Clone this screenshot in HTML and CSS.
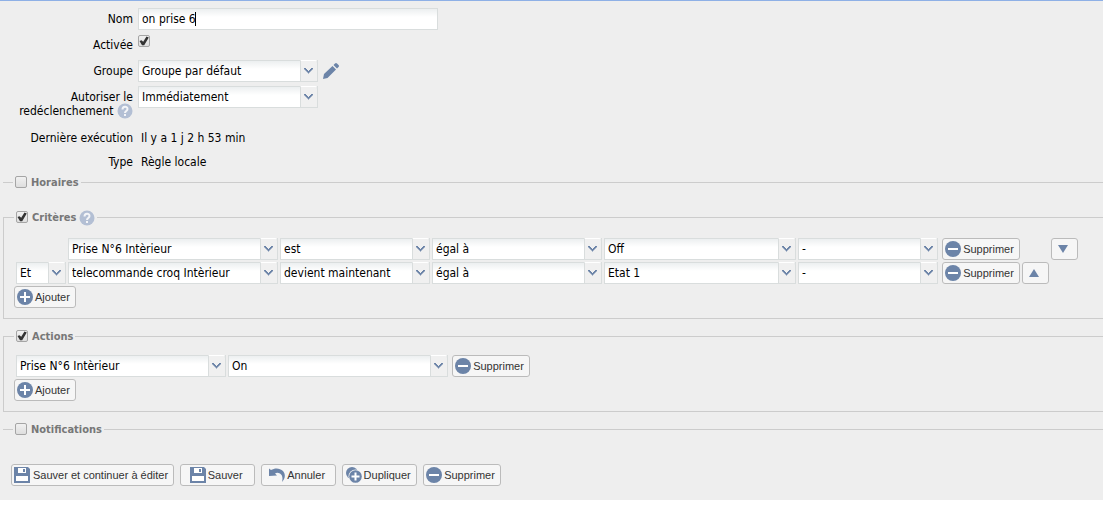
FILE: index.html
```html
<!DOCTYPE html>
<html lang="fr">
<head>
<meta charset="utf-8">
<title>Règle</title>
<link rel="stylesheet" href="styles.css">
</head>
<body>
<svg class="sprite" aria-hidden="true">
  <symbol id="chevron" viewBox="0 0 9 6"><path d="M0 0h2v1h1v1h1v1h1V2h1V1h1V0h2v1.500H8v1H7v1H6v1H5v1H4v-1H3v-1H2v-1H1v-1H0z"/></symbol>
  <symbol id="minus" viewBox="0 0 16 16"><circle cx="8" cy="8" r="8"/><path fill="#fff" d="M3 7h10v2H3z"/></symbol>
  <symbol id="plus" viewBox="0 0 16 16"><circle cx="8" cy="8" r="8"/><path fill="#fff" d="M7 3h2v4h4v2H9v4H7V9H3V7h4z"/></symbol>
  <symbol id="save" viewBox="0 0 16 16"><path d="M0 0h14l2 2v14H0z"/><path fill="#fff" d="M4 1h8v5H4zM2 9h12v5H2z"/><path d="M9 2h2v3H9z"/></symbol>
  <symbol id="undo" viewBox="0 0 16 16"><path d="M0 1.500l2 1.500C6 .5 11 1 14 4c3 3.500 2 8-1 11 1-4 .5-7-2-8.500-2-1-3.500-1-5 0L8 8.500 0 9z"/></symbol>
  <symbol id="copy" viewBox="0 0 16 16"><circle cx="6" cy="6" r="6"/><circle cx="9.500" cy="9.500" r="7" fill="#f5f5f5"/><circle cx="9.500" cy="9.500" r="6.300"/><path fill="#fff" d="M8.500 5.500h2v3h3v2h-3v3h-2v-3h-3v-2h3z"/></symbol>
  <symbol id="pencil" viewBox="0 0 16 16"><path d="M0 16l1-5 8.500-8L13 6.500 4.500 15zM10.500 2l1.500-1.500q1-1 2 0L15.500 2q1 1 0 2L14 5.500z"/></symbol>
  <symbol id="help" viewBox="0 0 16 16"><circle cx="8" cy="8" r="7.500"/><path fill="none" stroke="#f4f5f8" stroke-width="2" d="M5.500 6.500C5.500 3 10.500 3 10.500 6c0 2-2.500 2-2.500 4"/><path fill="#f4f5f8" d="M7 11h2v2H7z"/></symbol>
  <symbol id="down" viewBox="0 0 10 8"><path d="M0 0h10L5 8z"/></symbol>
  <symbol id="up" viewBox="0 0 10 8"><path d="M0 8h10L5 0z"/></symbol>
</svg>
<form class="rule">
  <div class="fields">
    <div class="row">
      <label class="row-label" for="name">Nom</label>
      <input class="text" id="name" type="text" value="on prise 6" autofocus>
    </div>
    <div class="row">
      <label class="row-label" for="active">Activée</label>
      <input class="check check-row" id="active" type="checkbox" checked>
    </div>
    <div class="row">
      <label class="row-label" for="group">Groupe</label>
      <span class="combo combo-field"><select id="group"><option>Groupe par défaut</option></select><svg class="chevron"><use href="#chevron"/></svg></span>
      <button class="plain" type="button" aria-label="Modifier le groupe"><svg class="icon"><use href="#pencil"/></svg></button>
    </div>
    <div class="row">
      <label class="row-label row-label-tall" for="retrigger">Autoriser le redéclenchement <svg class="help"><use href="#help"/></svg></label>
      <span class="combo combo-field"><select id="retrigger"><option>Immédiatement</option></select><svg class="chevron"><use href="#chevron"/></svg></span>
    </div>
    <div class="row">
      <span class="row-label">Dernière exécution</span>
      <span class="value">Il y a 1 j 2 h 53 min</span>
    </div>
    <div class="row">
      <span class="row-label">Type</span>
      <span class="value">Règle locale</span>
    </div>
  </div>

  <fieldset class="section section-closed">
    <legend><input class="check" id="hours" type="checkbox"><label for="hours">Horaires</label></legend>
  </fieldset>

  <fieldset class="section section-criteria">
    <legend><input class="check" id="criteria" type="checkbox" checked><label for="criteria">Critères</label><svg class="help"><use href="#help"/></svg></legend>
    <div class="lines">
      <div class="line criteria">
        <span class="combo combo-first"><select aria-label="Objet"><option>Prise N°6 Intèrieur</option></select><svg class="chevron"><use href="#chevron"/></svg></span>
        <span class="combo"><select aria-label="Condition"><option>est</option></select><svg class="chevron"><use href="#chevron"/></svg></span>
        <span class="combo"><select aria-label="Comparaison"><option>égal à</option></select><svg class="chevron"><use href="#chevron"/></svg></span>
        <span class="combo"><select aria-label="Valeur"><option>Off</option></select><svg class="chevron"><use href="#chevron"/></svg></span>
        <span class="combo"><select aria-label="Option"><option>-</option></select><svg class="chevron"><use href="#chevron"/></svg></span>
        <button class="btn btn-remove" type="button"><svg class="icon"><use href="#minus"/></svg>Supprimer</button>
        <button class="btn btn-down" type="button" aria-label="Descendre"><svg class="arrow"><use href="#down"/></svg></button>
      </div>
      <div class="line criteria">
        <span class="combo"><select aria-label="Opérateur"><option>Et</option></select><svg class="chevron"><use href="#chevron"/></svg></span>
        <span class="combo"><select aria-label="Objet"><option>telecommande croq Intèrieur</option></select><svg class="chevron"><use href="#chevron"/></svg></span>
        <span class="combo"><select aria-label="Condition"><option>devient maintenant</option></select><svg class="chevron"><use href="#chevron"/></svg></span>
        <span class="combo"><select aria-label="Comparaison"><option>égal à</option></select><svg class="chevron"><use href="#chevron"/></svg></span>
        <span class="combo"><select aria-label="Valeur"><option>Etat 1</option></select><svg class="chevron"><use href="#chevron"/></svg></span>
        <span class="combo"><select aria-label="Option"><option>-</option></select><svg class="chevron"><use href="#chevron"/></svg></span>
        <button class="btn btn-remove" type="button"><svg class="icon"><use href="#minus"/></svg>Supprimer</button>
        <button class="btn" type="button" aria-label="Monter"><svg class="arrow"><use href="#up"/></svg></button>
      </div>
      <button class="btn" type="button"><svg class="icon"><use href="#plus"/></svg>Ajouter</button>
    </div>
  </fieldset>

  <fieldset class="section section-actions">
    <legend><input class="check" id="actions" type="checkbox" checked><label for="actions">Actions</label></legend>
    <div class="lines">
      <div class="line actions">
        <span class="combo"><select aria-label="Objet"><option>Prise N°6 Intèrieur</option></select><svg class="chevron"><use href="#chevron"/></svg></span>
        <span class="combo"><select aria-label="Action"><option>On</option></select><svg class="chevron"><use href="#chevron"/></svg></span>
        <button class="btn btn-remove" type="button"><svg class="icon"><use href="#minus"/></svg>Supprimer</button>
      </div>
      <button class="btn" type="button"><svg class="icon"><use href="#plus"/></svg>Ajouter</button>
    </div>
  </fieldset>

  <fieldset class="section section-closed section-notify">
    <legend><input class="check" id="notify" type="checkbox"><label for="notify">Notifications</label></legend>
  </fieldset>

  <div class="toolbar">
    <button class="btn btn-wide" type="button"><svg class="icon"><use href="#save"/></svg>Sauver et continuer à éditer</button>
    <button class="btn" type="button"><svg class="icon"><use href="#save"/></svg>Sauver</button>
    <button class="btn" type="button"><svg class="icon"><use href="#undo"/></svg>Annuler</button>
    <button class="btn" type="button"><svg class="icon"><use href="#copy"/></svg>Dupliquer</button>
    <button class="btn" type="button"><svg class="icon"><use href="#minus"/></svg>Supprimer</button>
  </div>
</form>
</body>
</html>
```
FILE: styles.css
```css
*, *::before, *::after { box-sizing: border-box; }
body {
  margin: 0;
  background: #fff;
  color: #000;
  font: 12px/14px Tahoma, "DejaVu Sans Condensed", sans-serif;
  overflow-x: hidden;
}
.sprite { display: none; }
svg { flex: none; fill: #6c84a8; }
.rule {
  padding-bottom: 14px;
  border-top: 1px solid #8eb0e6;
  background: #eee;
}
.fields {
  display: flex;
  flex-direction: column;
  gap: 4px;
  padding-top: 7px;
}
.row {
  display: flex;
  align-items: flex-start;
  min-height: 20px;
}
.row:nth-child(-n+3) { min-height: 22px; }
.row-label {
  width: 133px;
  margin-right: 5px;
  padding-top: 4px;
  padding-left: 16px;
  text-align: right;
}
.row-label-tall { padding-bottom: 5px; }
.value { padding: 4px 3px 0; }
.help {
  width: 16px;
  height: 16px;
  margin: -1px 0;
  vertical-align: top;
  fill: #b3bfd4;
}
.text, .combo select {
  height: 22px;
  padding: 0 3px;
  border: 1px solid #d9dddd;
  border-radius: 0;
  outline: none;
  background: linear-gradient(#eceff0, #fff 8px);
  color: #000;
  font: inherit;
}
/* steady caret after the name */
.text {
  width: 300px;
  background:
    linear-gradient(#000, #000) 56px 3px / 1px 14px no-repeat,
    linear-gradient(#eceff0, #fff 8px);
  caret-color: transparent;
}
.check {
  appearance: none;
  width: 12px;
  height: 12px;
  margin: 0;
  border: 1px solid #a5a5a5;
  border-radius: 2px;
  background: linear-gradient(#f1f1f1, #dedede);
}
.check:checked::before {
  content: "";
  display: block;
  height: 10px;
  background: #333;
  clip-path: polygon(5% 50%, 25% 42%, 42% 58%, 75% 5%, 98% 15%, 52% 92%, 30% 92%);
}
.check-row { margin-top: 1px; }
.combo {
  position: relative;
  display: block;
  height: 22px;
}
.combo select {
  display: block;
  appearance: none;
  width: 100%;
  padding-right: 18px;
}
.combo::after {
  content: "";
  position: absolute;
  top: 0;
  right: 0;
  width: 18px;
  height: 22px;
  border: 1px solid #d9dddd;
  border-top-color: #fff;
  border-radius: 0 3px 0 0;
  background: #f0f0f0;
  pointer-events: none;
}
.chevron {
  position: absolute;
  z-index: 1;
  top: 8px;
  right: 5px;
  width: 9px;
  height: 6px;
  pointer-events: none;
}
.combo-field { width: 180px; }
.plain {
  display: flex;
  margin-left: 5px;
  padding: 3px 0;
  border: 0;
  background: none;
}
.icon { width: 16px; height: 16px; }
.section {
  min-width: 0;
  margin: 0 -1px 0 3px;
  padding: 13px 10px 10px;
  border: 1px solid #ccc;
}
.section legend {
  display: flex;
  align-items: center;
  height: 16px;
  padding: 0 2px;
  color: #777;
  font-size: 11px;
  font-weight: bold;
}
.section legend label { margin-left: 4px; padding-top: 1px; }
.section legend .help { margin: 2px 0 0 3px; }
.section-closed {
  margin-top: 3px;
  padding-top: 0;
  padding-bottom: 0;
  border-width: 1px 0 0;
}
.section-criteria { margin-top: 19px; }
.section-actions { margin-top: 9px; padding-top: 11px; }
.section-notify { margin-top: 9px; }
.lines {
  display: flex;
  flex-direction: column;
  align-items: flex-start;
  gap: 2px;
}
.line {
  display: grid;
  gap: 2px;
  padding-left: 2px;
}
.criteria { grid-template-columns: 50px 210px 150px 170px 192px 140px 80px 27px 27px; }
.actions { grid-template-columns: 210px 220px 80px; }
.combo-first { grid-column: 2; }
.btn-down { grid-column: 9; }
.btn-remove { margin-left: 2px; }
.btn {
  display: flex;
  align-items: center;
  justify-content: center;
  gap: 2px;
  height: 22px;
  padding: 0 5px 0 2px;
  border: 1px solid #bbb;
  border-radius: 3px;
  background: #f6f6f6;
  color: #333;
  font: 11px/14px Arial, "Liberation Sans", sans-serif;
  white-space: nowrap;
}
.btn-wide { gap: 3px; }
.arrow { width: 10px; height: 8px; }
.toolbar {
  display: flex;
  flex-wrap: wrap;
  gap: 6px;
  margin-top: 27px;
  padding: 0 11px;
}
.toolbar .btn { min-width: 75px; }
```
